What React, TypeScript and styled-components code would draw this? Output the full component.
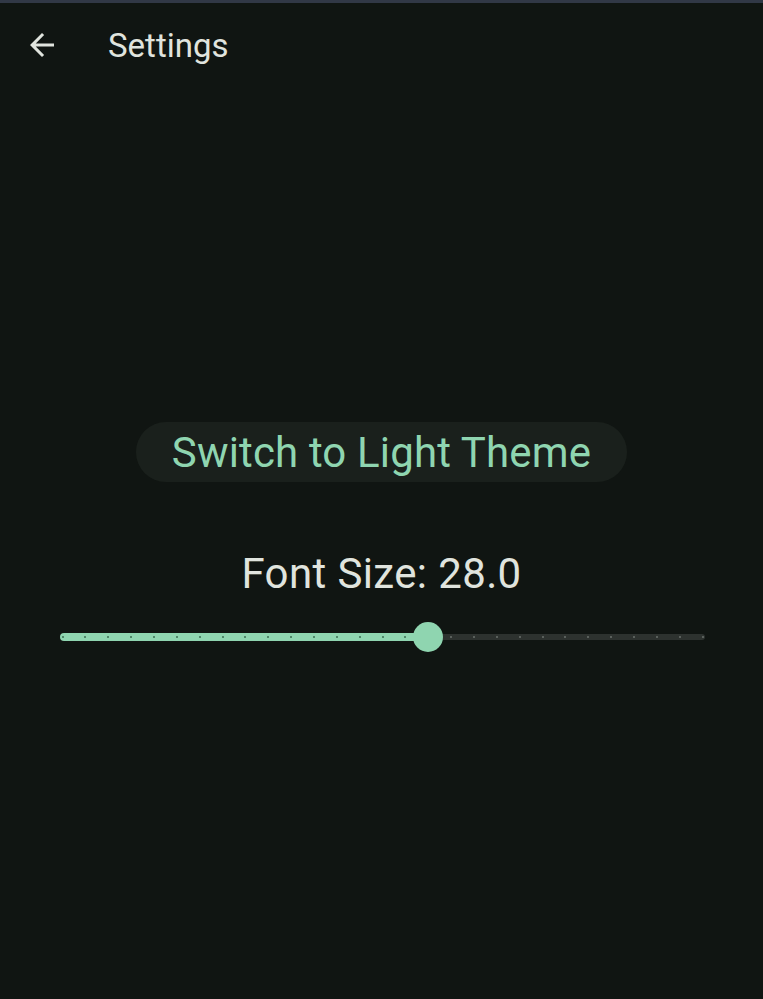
import React from "react";
import styled, { createGlobalStyle } from "styled-components";

const Global = createGlobalStyle`
  html, body { margin: 0; padding: 0; background: #101512; }
  body { font-family: Roboto, "Noto Sans", sans-serif; }
  * { box-sizing: border-box; }
`;

const Page = styled.div`
  width: 763px;
  height: 999px;
  background: #101512;
  border-top: 3px solid #313846;
  display: flex;
  flex-direction: column;
  overflow: hidden;
`;

const AppBar = styled.header`
  height: 84px;
  display: flex;
  align-items: center;
  padding-left: 24px;
  gap: 48px;
  color: #e0e4de;
`;

const IconButton = styled.button`
  width: 36px;
  height: 36px;
  padding: 0;
  border: none;
  background: transparent;
  color: #e0e4de;
  display: flex;
  align-items: center;
  justify-content: center;
`;

const Title = styled.h1`
  margin: 0;
  font-size: 33px;
  font-weight: 400;
  line-height: 1;
  color: #e0e4de;
`;

const Body = styled.main`
  display: flex;
  flex-direction: column;
  align-items: center;
  padding-top: 335px;
`;

const PillButton = styled.button`
  height: 60px;
  width: 491px;
  border: none;
  border-radius: 30px;
  background: #1a201c;
  color: #8fd5b0;
  font-family: Roboto, sans-serif;
  font-size: 42px;
  font-weight: 400;
  letter-spacing: 0.15px;
  display: flex;
  align-items: center;
  justify-content: center;
  padding: 0;
`;

const Label = styled.div`
  margin-top: 67px;
  font-size: 42px;
  line-height: 49px;
  letter-spacing: 0.375px;
  color: #e0e4de;
`;

const SliderWrap = styled.div`
  margin-top: 24px;
  width: 763px;
  padding: 0 58px 0 60px;
`;

const Track = styled.div`
  position: relative;
  height: 30px;
  display: flex;
  align-items: center;
`;

const Active = styled.div`
  height: 8px;
  background: #8fd5b0;
  border-radius: 4px 0 0 4px;
`;

const Inactive = styled.div`
  height: 6px;
  flex: 1;
  background: #2d322f;
  border-radius: 0 3px 3px 0;
`;

const Tick = styled.span<{ $on: boolean }>`
  position: absolute;
  top: 14px;
  width: 2px;
  height: 2px;
  border-radius: 50%;
  background: ${(p) => (p.$on ? "#3a6c52" : "#6a706c")};
`;

const Thumb = styled.span`
  position: absolute;
  top: 0;
  width: 30px;
  height: 30px;
  border-radius: 50%;
  background: #8fd5b0;
`;

export default function App() {
  const min = 12;
  const max = 40;
  const value = 28;
  const divisions = 28;
  const width = 645;
  const start = 2.5;
  const usable = 640;
  const frac = (value - min) / (max - min);
  const thumbX = start + usable * frac;
  const ticks = Array.from({ length: divisions + 1 }, (_, i) => start + (usable * i) / divisions);
  return (
    <Page>
      <Global />
      <AppBar>
        <IconButton aria-label="Back">
          <svg width="36" height="36" viewBox="0 0 24 24" fill="currentColor">
            <path d="M20 11H7.83l5.59-5.59L12 4l-8 8 8 8 1.41-1.41L7.83 13H20v-2z" />
          </svg>
        </IconButton>
        <Title>Settings</Title>
      </AppBar>
      <Body>
        <PillButton>Switch to Light Theme</PillButton>
        <Label>Font Size: 28.0</Label>
        <SliderWrap>
          <Track style={{ width }}>
            <Active style={{ width: thumbX }} />
            <Inactive />
            {ticks.map((x, i) => (
              <Tick key={i} $on={x < thumbX} style={{ left: x - 1 }} />
            ))}
            <Thumb style={{ left: thumbX - 15 }} />
          </Track>
        </SliderWrap>
      </Body>
    </Page>
  );
}
